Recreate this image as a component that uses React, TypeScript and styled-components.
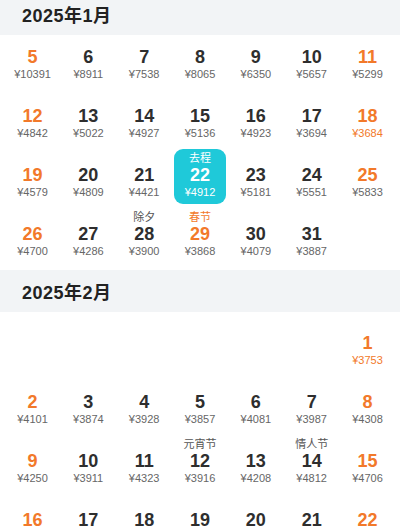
import React, { useLayoutEffect, useRef } from 'react';
import styled, { createGlobalStyle } from 'styled-components';

const ORANGE = '#f2792a';
const TEAL = '#1fc9d9';

const GlobalStyle = createGlobalStyle`
  html, body {
    margin: 0;
    padding: 0;
    background: #fff;
  }

  body {
    font-family: "Liberation Sans", "Noto Sans CJK SC", sans-serif;
    -webkit-font-smoothing: antialiased;
  }
`;

const Scroller = styled.div`
  height: 100vh;
  overflow-y: auto;
  scrollbar-width: none;

  &::-webkit-scrollbar {
    display: none;
  }
`;

const MonthSection = styled.section`
  background: #fff;
`;

const MonthHeader = styled.div`
  position: sticky;
  top: -7px;
  z-index: 1;
  height: 42px;
  display: flex;
  align-items: center;
  padding-left: 22px;
  background: #f2f4f6;
  color: #222;
  font-size: 18px;
  font-weight: 700;
  letter-spacing: 0.5px;
`;

const DayGrid = styled.div`
  display: grid;
  grid-template-columns: repeat(7, 1fr);
  column-gap: 4.8px;
  row-gap: 4px;
  padding: 5px 7px 7px;
`;

const DayCell = styled.div<{ $selected?: boolean }>`
  height: 55px;
  box-sizing: border-box;
  padding-top: 3px;
  display: flex;
  flex-direction: column;
  align-items: center;
  border-radius: 9px;
  background: ${(p) => (p.$selected ? TEAL : 'transparent')};
`;

type Tone = 'dark' | 'orange' | 'gray' | 'white';

const toneColor = (tone: Tone, fallback: string) => {
  if (tone === 'orange') return ORANGE;
  if (tone === 'white') return '#fff';
  if (tone === 'dark') return '#2e2e2e';
  return fallback;
};

const DayLabel = styled.div<{ $tone: Tone }>`
  height: 13px;
  line-height: 13px;
  font-size: 11px;
  color: ${(p) => toneColor(p.$tone, '#555')};
`;

const DayNumber = styled.div<{ $tone: Tone }>`
  line-height: 20px;
  font-size: 18px;
  font-weight: 700;
  color: ${(p) => toneColor(p.$tone, '#2e2e2e')};
`;

const DayPrice = styled.div<{ $tone: Tone }>`
  line-height: 14px;
  font-size: 11px;
  color: ${(p) => toneColor(p.$tone, '#666')};
`;

interface MonthData {
  year: number;
  month: number; // 1-based
  firstDay: number;
  prices: number[];
  labels: Record<number, { text: string; holiday?: boolean }>;
}

const months: MonthData[] = [
  {
    year: 2025,
    month: 1,
    firstDay: 5,
    prices: [
      10391, 8911, 7538, 8065, 6350, 5657, 5299,
      4842, 5022, 4927, 5136, 4923, 3694, 3684,
      4579, 4809, 4421, 4912, 5181, 5551, 5833,
      4700, 4286, 3900, 3868, 4079, 3887,
    ],
    labels: {
      28: { text: '除夕' },
      29: { text: '春节', holiday: true },
    },
  },
  {
    year: 2025,
    month: 2,
    firstDay: 1,
    prices: [
      3753,
      4101, 3874, 3928, 3857, 4081, 3987, 4308,
      4250, 3911, 4323, 3916, 4208, 4812, 4706,
      4388, 4052, 3962, 4017, 3896, 4120, 4465,
      4210, 3978, 3921, 4006, 4153, 4587,
    ],
    labels: {
      12: { text: '元宵节' },
      14: { text: '情人节' },
    },
  },
];

const selected = { year: 2025, month: 1, day: 22, text: '去程' };

const Month: React.FC<{ data: MonthData }> = ({ data }) => {
  const { year, month, firstDay, prices, labels } = data;
  const lead = firstDay === 1 ? new Date(year, month - 1, 1).getDay() : 0;
  const lowest = Math.min(...prices);

  return (
    <MonthSection>
      <MonthHeader>
        {year}年{month}月
      </MonthHeader>
      <DayGrid>
        {Array.from({ length: lead }).map((_, i) => (
          <DayCell key={`blank-${i}`} />
        ))}
        {prices.map((price, i) => {
          const day = firstDay + i;
          const weekday = new Date(year, month - 1, day).getDay();
          const label = labels[day];
          const isSelected = selected.year === year && selected.month === month && selected.day === day;
          const weekend = weekday === 0 || weekday === 6;

          if (isSelected) {
            return (
              <DayCell key={day} $selected>
                <DayLabel $tone="white">{selected.text}</DayLabel>
                <DayNumber $tone="white">{day}</DayNumber>
                <DayPrice $tone="white">¥{price}</DayPrice>
              </DayCell>
            );
          }

          return (
            <DayCell key={day}>
              <DayLabel $tone={label?.holiday ? 'orange' : 'gray'}>{label?.text}</DayLabel>
              <DayNumber $tone={weekend || label?.holiday ? 'orange' : 'dark'}>{day}</DayNumber>
              <DayPrice $tone={price === lowest ? 'orange' : 'gray'}>¥{price}</DayPrice>
            </DayCell>
          );
        })}
      </DayGrid>
    </MonthSection>
  );
};

export default function App() {
  const scrollRef = useRef<HTMLDivElement>(null);

  // the list is shown slightly scrolled, with the first month header stuck on top
  useLayoutEffect(() => {
    if (scrollRef.current) scrollRef.current.scrollTop = 16;
  }, []);

  return (
    <>
      <GlobalStyle />
      <Scroller ref={scrollRef}>
        {months.map((m) => (
          <Month key={`${m.year}-${m.month}`} data={m} />
        ))}
      </Scroller>
    </>
  );
}
